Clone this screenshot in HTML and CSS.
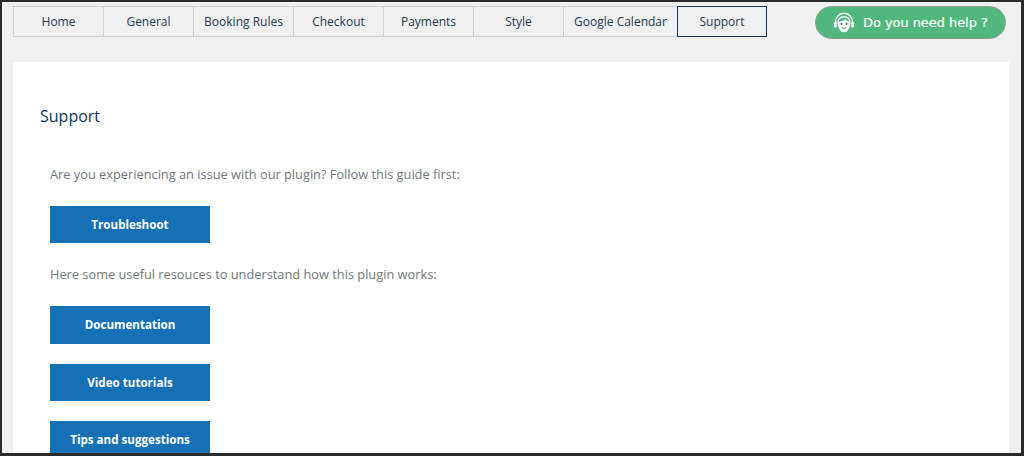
FILE: index.html
```html
<!DOCTYPE html>
<html lang="en">
<head>
<meta charset="utf-8">
<title>Support</title>
<link rel="stylesheet" href="styles.css">
</head>
<body>
<div class="frame">
  <header class="top">
    <nav class="tabs">
      <a class="tab">Home</a>
      <a class="tab">General</a>
      <a class="tab tab-wide">Booking Rules</a>
      <a class="tab">Checkout</a>
      <a class="tab">Payments</a>
      <a class="tab">Style</a>
      <a class="tab tab-cal">Google Calendar</a>
      <a class="tab tab-active">Support</a>
    </nav>
    <a class="help">
      <svg class="help-icon" viewBox="0 0 24 24" width="22" height="22" fill="none" stroke="#fff" stroke-width="1.6" aria-hidden="true">
        <path d="M2.800 12V10.500a9.200 9.200 0 0 1 18.400 0V12"/>
        <rect x="1" y="10.500" width="3" height="6.500" rx="1.500" fill="#fff" stroke="none"/>
        <rect x="20" y="10.500" width="3" height="6.500" rx="1.500" fill="#fff" stroke="none"/>
        <path d="M5 10.500C5 6.500 8 4.500 12 4.500s7 2 7 6c.3 6-3 11.500-7 11.500S4.700 16.500 5 10.500z" fill="#fff" stroke="none"/>
        <path d="M6.300 10.200c3 .3 5.400-.6 7-2.300 1 1.300 2.500 2 4.400 2.200-.6-2.600-2.800-4-5.700-4s-5.100 1.500-5.700 4.100z" fill="#52b77d" stroke="none"/>
        <circle cx="9.200" cy="13" r="1.150" fill="#3d7d5a" stroke="none"/>
        <circle cx="14.800" cy="13" r="1.150" fill="#3d7d5a" stroke="none"/>
        <path d="M9.600 17c1.500 1 3.300 1 4.800 0" stroke="#3d7d5a" stroke-width="1.100"/>
      </svg>
      <span>Do you need help ?</span>
    </a>
  </header>
  <main class="panel">
    <h1 class="title">Support</h1>
    <div class="content">
      <p class="text">Are you experiencing an issue with our plugin? Follow this guide first:</p>
      <a class="btn btn-first">Troubleshoot</a>
      <p class="text text-second">Here some useful resouces to understand how this plugin works:</p>
      <a class="btn btn-doc">Documentation</a>
      <a class="btn">Video tutorials</a>
      <a class="btn">Tips and suggestions</a>
    </div>
  </main>
</div>
</body>
</html>
```
FILE: styles.css
```css
* {
  box-sizing: border-box;
}

html,
body {
  margin: 0;
  height: 456px;
  overflow: hidden;
}

body {
  font-family: "Open Sans", "Noto Sans", sans-serif;
}

.frame {
  height: 456px;
  background: #f0f0f0;
  border-style: solid;
  border-color: #2b2b2b;
  border-width: 2px 3px 3px 2px;
  padding: 4px 12px 0 11px;
  overflow: hidden;
}

.top {
  display: flex;
  align-items: flex-start;
}

.tabs {
  display: flex;
  height: 31px;
  width: 754px;
}

.tab {
  width: 91px;
  height: 31px;
  margin-right: -1px;
  flex: none;
  display: flex;
  align-items: center;
  justify-content: center;
  border: 1px solid #ccd0d4;
  color: #23394d;
  font-size: 12px;
  white-space: nowrap;
}

.tab-wide {
  width: 101px;
}

.tab-cal {
  width: 115px;
}

.tab-active {
  width: 90px;
  margin-right: 0;
  border-color: #0f3557;
  position: relative;
}

.help {
  margin-left: 48px;
  width: 191px;
  height: 33px;
  flex: none;
  display: flex;
  align-items: center;
  gap: 8px;
  padding-left: 17px;
  background: #52b77d;
  border: 1px solid #909c94;
  border-radius: 17px;
  color: #fff;
  font-family: "DejaVu Sans", sans-serif;
  font-size: 12.9px;
  font-weight: 400;
  -webkit-text-stroke: 0.15px #fff;
  white-space: nowrap;
}

.help-icon {
  flex: none;
}

.panel {
  margin-top: 23px;
  height: 420px;
  background: #fff;
  padding: 43px 27px 0;
  overflow: hidden;
}

.title {
  margin: 0;
  font-size: 16px;
  line-height: 22px;
  font-weight: 400;
  color: #0f3557;
}

.content {
  padding: 0 0 0 10px;
}

.text {
  margin: 38px 0 0;
  font-size: 12.8px;
  line-height: 18px;
  color: #72777c;
}

.text-second {
  margin-top: 22px;
}

.btn {
  display: flex;
  align-items: center;
  justify-content: center;
  width: 160px;
  height: 37px;
  margin-top: 20px;
  background: #1670b6;
  color: #fff;
  font-size: 11.6px;
  font-weight: 700;
}

.btn-first {
  margin-top: 23px;
}

.btn-doc {
  height: 38px;
  margin-top: 23px;
  padding-bottom: 1px;
}
```
